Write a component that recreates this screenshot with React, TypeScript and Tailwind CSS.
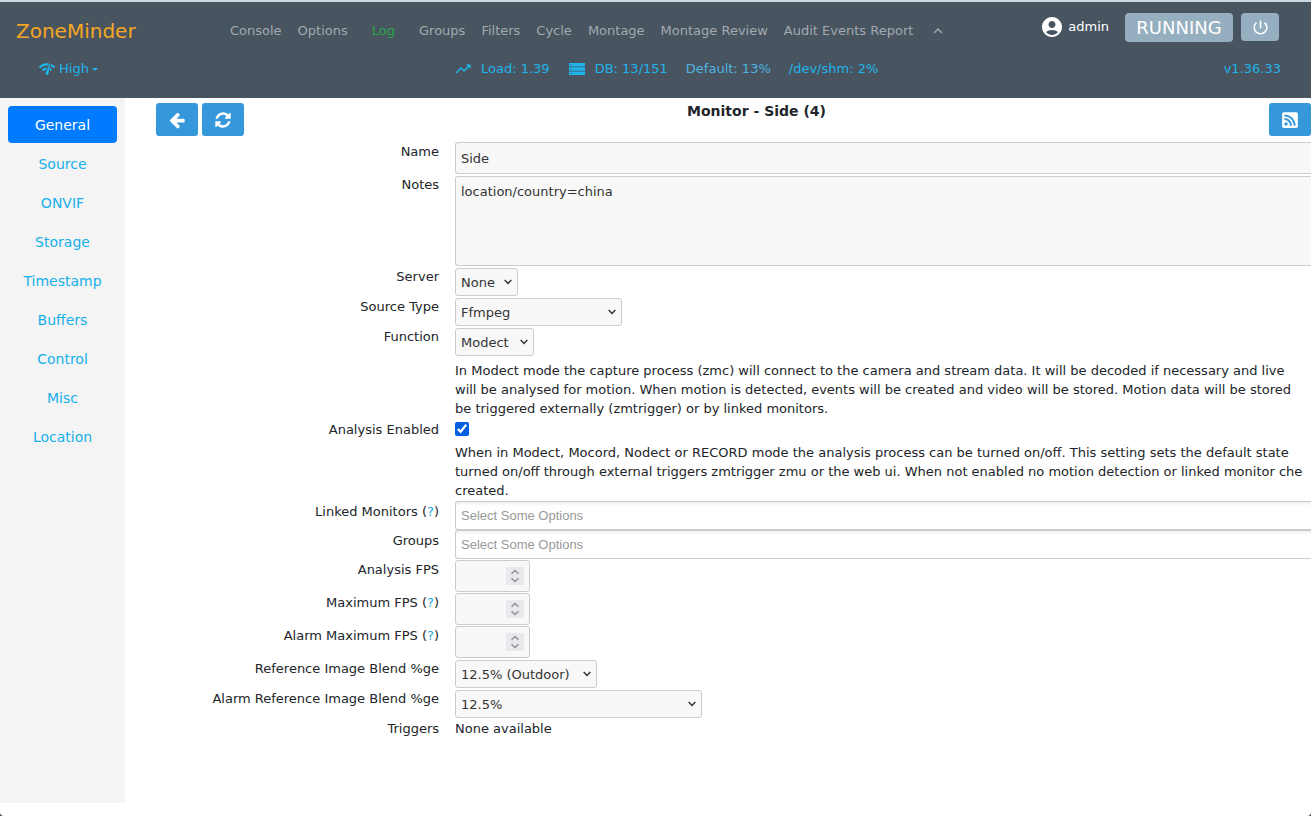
import React, { useState } from 'react';
import {
  MdAccountCircle,
  MdExpandLess,
  MdNetworkCheck,
  MdPowerSettingsNew,
  MdTrendingUp
} from 'react-icons/md';
import { FaRssSquare } from 'react-icons/fa';

const navItems = [
  'Console',
  'Options',
  'Log',
  'Groups',
  'Filters',
  'Cycle',
  'Montage',
  'Montage Review',
  'Audit Events Report'
];

const tabs = [
  'General',
  'Source',
  'ONVIF',
  'Storage',
  'Timestamp',
  'Buffers',
  'Control',
  'Misc',
  'Location'
];

const ArrowLeftIcon: React.FC = () => (
  <svg viewBox="0 0 1792 1792" className="size-[18px]" fill="currentColor" aria-hidden="true">
    <path d="M1664 896v128q0 53-32.5 90.500t-84.500 37.500h-704l293 294q38 36 38 90t-38 90l-75 76q-37 37-90 37-52 0-91-37l-651-652q-37-37-37-90 0-52 37-91l651-650q38-38 91-38 52 0 90 38l75 74q38 38 38 91t-38 91l-293 293h704q52 0 84.500 37.500t32.500 90.500z" />
  </svg>
);

const RefreshIcon: React.FC = () => (
  <svg viewBox="0 0 1792 1792" className="size-[18px]" fill="currentColor" aria-hidden="true">
    <path d="M1639 1056q0 5-1 7-64 268-268 434.500t-478 166.500q-146 0-282.500-55t-243.500-157l-129 129q-19 19-45 19t-45-19-19-45v-448q0-26 19-45t45-19h448q26 0 45 19t19 45-19 45l-137 137q71 66 161 102t187 36q134 0 250-65t186-179q11-17 53-117 8-23 30-23h192q13 0 22.500 9.500t9.500 22.500zm25-800v448q0 26-19 45t-45 19h-448q-26 0-45-19t-19-45 19-45l138-138q-148-137-349-137-134 0-250 65t-186 179q-11 17-53 117-8 23-30 23h-199q-13 0-22.500-9.500t-9.500-22.500v-7q65-268 270-434.500t480-166.500q146 0 284 55.500t245 156.500l130-129q19-19 45-19t45 19 19 45z" />
  </svg>
);

const StorageIcon: React.FC = () => (
  <svg viewBox="0 0 16 12" className="mr-px ml-px h-3 w-4" fill="currentColor" aria-hidden="true">
    <path
      fillRule="evenodd"
      d="M0 0h16v3.400H0zM1.500 1.200v1.100h1.100V1.200zM0 4.300h16v3.400H0zM1.500 5.500v1.100h1.100V5.500zM0 8.600h16V12H0zM1.500 9.800v1.100h1.100V9.800z"
    />
  </svg>
);

interface RowProps {
  id?: string;
  label: string;
  help?: boolean;
  children: React.ReactNode;
}

const Row: React.FC<RowProps> = ({ id, label, help, children }) => (
  <div className="flex gap-4">
    <div className="w-[283px] shrink-0 pt-px text-right leading-[19px]">
      <label htmlFor={id}>{label}</label>
      {help && (
        <>
          {' '}(<a href="#help" className="text-[#16a9e0]">?</a>)
        </>
      )}
    </div>
    <div className="min-w-0 flex-1">{children}</div>
  </div>
);

interface SelectProps {
  id: string;
  value: string;
  width: string;
}

const Select: React.FC<SelectProps> = ({ id, value, width }) => (
  <div className={`relative mt-0.5 ${width}`}>
    <select
      id={id}
      defaultValue={value}
      className="block h-7 w-full appearance-none rounded-[3px] border border-[#ccc] bg-[#f8f8f8] pt-px pl-[5px] text-[#333]"
    >
      <option>{value}</option>
    </select>
    <svg
      viewBox="0 0 8 6"
      className="pointer-events-none absolute top-[11px] right-1.5 h-1.5 w-2"
      fill="none"
      stroke="#333"
      strokeWidth="1.5"
      aria-hidden="true"
    >
      <path d="M0.700 1 4 4.500 7.300 1" />
    </svg>
  </div>
);

const NumberInput: React.FC<{ id: string }> = ({ id }) => (
  <div className="relative mt-px w-[75px]">
    <input
      id={id}
      type="number"
      className="block h-8 w-full rounded-[3px] border border-[#ccc] bg-[#f8f8f8] pl-[5px] text-[#333] [appearance:textfield]"
    />
    <svg
      viewBox="0 0 18 18"
      className="pointer-events-none absolute top-[7px] right-1.5 size-[18px]"
      fill="none"
      stroke="#8f8f9d"
      strokeWidth="1.5"
      aria-hidden="true"
    >
      <rect width="18" height="18" fill="#e9e9ed" stroke="none" />
      <path d="M5.500 6.700 9 3.500l3.500 3.200M5.500 11.300 9 14.500l3.500-3.200" />
    </svg>
  </div>
);

const TagInput: React.FC<{ id: string }> = ({ id }) => (
  <input
    id={id}
    type="text"
    placeholder="Select Some Options"
    className="block h-[29px] w-full rounded-l-[3px] border border-r-0 border-[#ccc] bg-linear-to-b from-[#f0f0f0] to-white to-15% pl-[5px] font-['Liberation_Sans',Arial,sans-serif] placeholder:text-[#999]"
  />
);

const Header: React.FC = () => (
  <header className="border-t-2 border-[#c9d6df] bg-[#485460] pb-[19px]">
    <div className="flex h-[57px] items-center pr-8 pl-4">
      <a href="#home" className="w-[214px] shrink-0 text-[20px] text-[#f5a623]">
        ZoneMinder
      </a>
      <nav className="flex items-center gap-4 whitespace-nowrap text-[#a3a9af]">
        {navItems.map((item) => (
          <a key={item} href="#nav" className={item === 'Log' ? 'px-2 text-[#28a745]' : ''}>
            {item}
          </a>
        ))}
        <button type="button" aria-label="Collapse header">
          <MdExpandLess className="size-[18px]" />
        </button>
      </nav>
      <div className="ml-auto flex items-start self-start pt-[11px] text-white">
        <a href="#user" className="flex h-7 items-center gap-1">
          <MdAccountCircle className="size-6" />
          admin
        </a>
        <button type="button" className="ml-4 h-[29px] w-[108px] rounded bg-[#95afc0] text-[18px] leading-7">
          RUNNING
        </button>
        <button
          type="button"
          aria-label="Log out"
          className="ml-2 flex h-7 w-[38px] items-center justify-center rounded bg-[#95afc0]"
        >
          <MdPowerSettingsNew className="size-[19px]" />
        </button>
      </div>
    </div>
    <div className="flex h-5 items-center pr-[30px] pl-[38px] whitespace-nowrap text-[#1fb4ec]">
      <div className="w-[416px] shrink-0">
        <button type="button" className="flex items-center">
          <MdNetworkCheck className="size-[18px]" />
          <span className="ml-[3px]">High</span>
          <svg viewBox="0 0 6 3" className="ml-[3px] h-[3px] w-1.5" fill="currentColor" aria-hidden="true">
            <path d="M0 0h6L3 3z" />
          </svg>
        </button>
      </div>
      <div className="flex items-center gap-[18px]">
        <span className="flex items-center gap-[9px]">
          <MdTrendingUp className="size-[18px]" />
          Load: 1.39
        </span>
        <span className="flex items-center gap-[9px]">
          <StorageIcon />
          DB: 13/151
        </span>
        <span className="text-[#4fb3e0]">Default: 13%</span>
        <span>/dev/shm: 2%</span>
      </div>
      <a href="#version" className="ml-auto">v1.36.33</a>
    </div>
  </header>
);

const App: React.FC = () => {
  const [activeTab, setActiveTab] = useState('General');

  return (
    <div className="relative flex min-h-screen flex-col overflow-hidden bg-white font-['DejaVu_Sans',Verdana,sans-serif] text-[13px] text-[#212529]">
      <Header />

      <div className="mb-[13px] flex flex-1">
        {/* Monitor tabs */}
        <nav className="flex w-[125px] shrink-0 flex-col gap-0.5 bg-[#f4f4f4] p-2 text-[14px]">
          {tabs.map((tab) => (
            <button
              key={tab}
              type="button"
              onClick={() => setActiveTab(tab)}
              className={`h-[37px] rounded pt-0.5 ${
                tab === activeTab ? 'bg-[#007bff] text-white' : 'text-[#16b0ea]'
              }`}
            >
              {tab}
            </button>
          ))}
        </nav>

        <main className="min-w-0 flex-1 pt-[5px] pl-[31px]">
          <div className="flex h-[38px] items-start justify-between">
            <div className="flex gap-1 text-white">
              <button
                type="button"
                aria-label="Back"
                className="flex h-[33px] w-[42px] items-center justify-center rounded-[3px] bg-[#3498db]"
              >
                <ArrowLeftIcon />
              </button>
              <button
                type="button"
                aria-label="Refresh"
                className="flex h-[33px] w-[42px] items-center justify-center rounded-[3px] bg-[#3498db]"
              >
                <RefreshIcon />
              </button>
            </div>
            <h2 className="text-[14px] leading-4 font-bold">Monitor - Side (4)</h2>
            <button
              type="button"
              aria-label="Probe"
              className="flex h-[33px] w-[42px] items-center justify-center rounded-[3px] bg-[#3498db] text-white"
            >
              <FaRssSquare className="size-[18px]" />
            </button>
          </div>

          <form>
            <Row id="name" label="Name">
              <input
                id="name"
                type="text"
                defaultValue="Side"
                className="mt-px block h-8 w-full rounded-l-[3px] border border-r-0 border-[#ccc] bg-[#f8f8f8] pl-[5px] text-[#333]"
              />
            </Row>
            <Row id="notes" label="Notes">
              <textarea
                id="notes"
                defaultValue="location/country=china"
                className="mt-0.5 block h-[90px] w-full resize-none rounded-l-[3px] border border-r-0 border-[#ccc] bg-[#f8f8f8] py-[5px] pl-[5px] leading-5 text-[#333]"
              />
            </Row>
            <Row id="server" label="Server">
              <Select id="server" value="None" width="w-[63px]" />
            </Row>
            <Row id="type" label="Source Type">
              <Select id="type" value="Ffmpeg" width="w-[167px]" />
            </Row>
            <Row id="function" label="Function">
              <Select id="function" value="Modect" width="w-[79px]" />
              <p className="mt-[5px] mb-px leading-[19px] whitespace-nowrap">
                In Modect mode the capture process (zmc) will connect to the camera and stream data. It will be decoded if necessary and live
                <br />
                will be analysed for motion. When motion is detected, events will be created and video will be stored. Motion data will be stored
                <br />
                be triggered externally (zmtrigger) or by linked monitors.
              </p>
            </Row>
            <Row id="analysis" label="Analysis Enabled">
              <input
                id="analysis"
                type="checkbox"
                defaultChecked
                className="mt-[3px] block size-3.5 accent-[#0060df]"
              />
              <p className="mt-[7px] mb-px leading-[19px] whitespace-nowrap">
                When in Modect, Mocord, Nodect or RECORD mode the analysis process can be turned on/off. This setting sets the default state
                <br />
                turned on/off through external triggers zmtrigger zmu or the web ui. When not enabled no motion detection or linked monitor che
                <br />
                created.
              </p>
            </Row>
            <Row id="linked" label="Linked Monitors" help>
              <TagInput id="linked" />
            </Row>
            <Row id="groups" label="Groups">
              <TagInput id="groups" />
            </Row>
            <Row id="analysisFps" label="Analysis FPS">
              <NumberInput id="analysisFps" />
            </Row>
            <Row id="maxFps" label="Maximum FPS" help>
              <NumberInput id="maxFps" />
            </Row>
            <Row id="alarmMaxFps" label="Alarm Maximum FPS" help>
              <NumberInput id="alarmMaxFps" />
            </Row>
            <Row id="refBlend" label="Reference Image Blend %ge">
              <Select id="refBlend" value="12.5% (Outdoor)" width="w-[142px]" />
            </Row>
            <Row id="alarmRefBlend" label="Alarm Reference Image Blend %ge">
              <Select id="alarmRefBlend" value="12.5%" width="w-[247px]" />
            </Row>
            <Row label="Triggers">
              <p className="pt-px leading-[19px]">None available</p>
            </Row>
          </form>
        </main>
      </div>

      {/* Rounded window corners */}
      <svg viewBox="0 0 4 4" className="absolute bottom-0 left-0 size-1" fill="#444" aria-hidden="true">
        <path d="M0 0Q0 4 4 4H0z" />
      </svg>
      <svg viewBox="0 0 4 4" className="absolute right-0 bottom-0 size-1" fill="#444" aria-hidden="true">
        <path d="M4 0Q4 4 0 4H4z" />
      </svg>
    </div>
  );
};

export default App;
